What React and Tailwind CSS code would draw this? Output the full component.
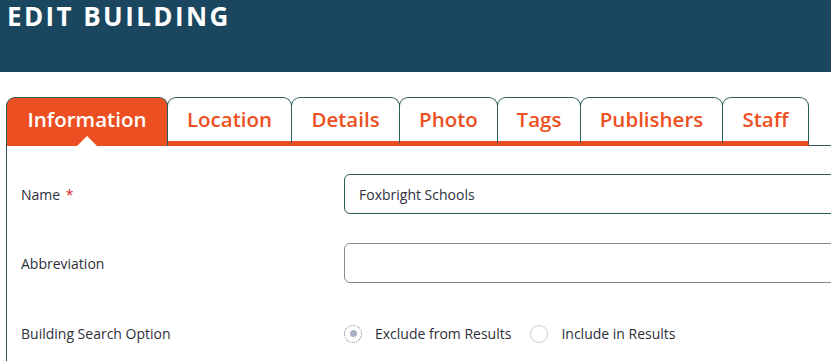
const tabs = [
  { label: 'Information', w: 'w-[162px]', active: true },
  { label: 'Location', w: 'w-[125px]' },
  { label: 'Details', w: 'w-[109px]' },
  { label: 'Photo', w: 'w-[99px]' },
  { label: 'Tags', w: 'w-[84px]' },
  { label: 'Publishers', w: 'w-[143px]' },
  { label: 'Staff', w: 'w-[87px]' },
]

function Tab({ label, w, active }) {
  if (active) {
    return (
      <div className={`relative ${w} h-[49px] flex items-center justify-center rounded-t-[9px] border border-b-0 border-[#2a5c5a] bg-[#ec5022] pb-[6px]`}>
        <span className="text-[20.5px] font-semibold text-white">{label}</span>
        {/* notch */}
        <span className="absolute bottom-0 left-1/2 -translate-x-1/2 w-0 h-0 border-l-[10px] border-r-[10px] border-b-[10px] border-l-transparent border-r-transparent border-b-white"></span>
      </div>
    )
  }
  return (
    <div className={`${w} h-[49px] -ml-px flex items-center justify-center rounded-t-[9px] border border-[#2a5c5a] border-b-[5px] border-b-[#ec5022] bg-white pb-[1px]`}>
      <span className="text-[20.5px] font-semibold text-[#ec5022]">{label}</span>
    </div>
  )
}

export default function App() {
  return (
    <div className="w-[831px] h-[361px] overflow-hidden bg-white font-['Open_Sans',sans-serif]">
      {/* Header */}
      <div className="h-[72px] bg-[#1a4660] px-[7px]">
        <h1 className="text-[26px] leading-[32px] font-bold tracking-[2.4px] text-white">EDIT BUILDING</h1>
      </div>

      {/* Tabs */}
      <div className="pl-[6px] pt-[25px]">
        <div className="flex items-end">
          {tabs.map((t) => (
            <Tab key={t.label} {...t} />
          ))}
          <div className="flex-1 border-b border-[#2a5c5a]"></div>
        </div>

        {/* Panel */}
        <div className="border-l border-[#2a5c5a] pl-[14px] pt-[28px] h-[220px]">
          <div className="grid grid-cols-[323px_1fr] items-center gap-y-[29px] text-[14px] text-[#2e2f3a]">
            <div>
              Name <span className="text-[#d9262c] ml-[2px]">*</span>
            </div>
            <div className="w-[600px] h-[40px] rounded-[6px] border border-[#2a5c5a] flex items-center px-[14px]">
              Foxbright Schools
            </div>

            <div>Abbreviation</div>
            <div className="w-[600px] h-[40px] rounded-[6px] border border-[#8a8a8a]"></div>

            <div className="pt-[11px]">Building Search Option</div>
            <div className="pt-[11px] flex items-center">
              <span className="w-[18px] h-[18px] rounded-full border border-dotted border-[#6b7080] flex items-center justify-center">
                <span className="w-[7px] h-[7px] rounded-full bg-[#a9b1c6]"></span>
              </span>
              <span className="ml-[13px]">Exclude from Results</span>
              <span className="ml-[19px] w-[18px] h-[18px] rounded-full border border-[#c8cdd6]"></span>
              <span className="ml-[13px]">Include in Results</span>
            </div>
          </div>
        </div>
      </div>
    </div>
  )
}
